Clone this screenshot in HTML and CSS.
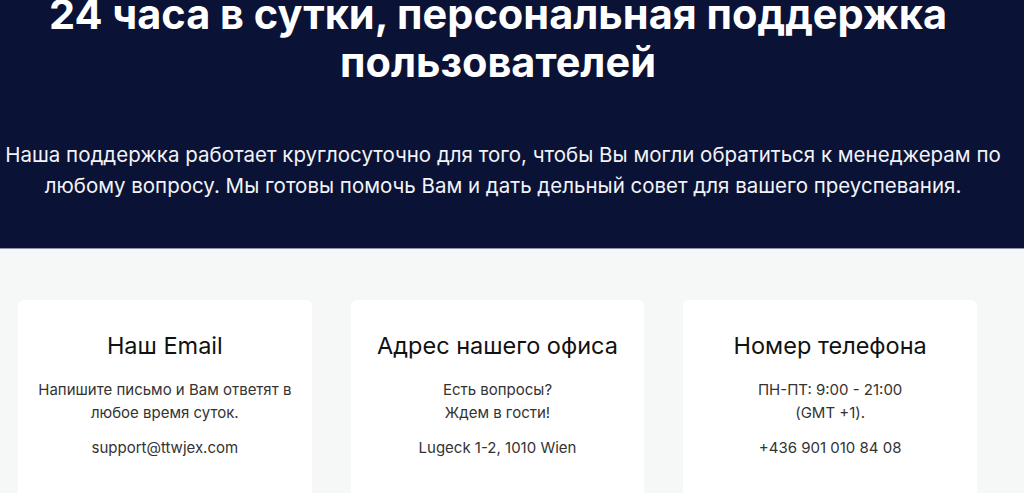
FILE: index.html
```html
<!DOCTYPE html>
<html lang="ru">
  <head>
    <meta charset="UTF-8" />
    <meta name="viewport" content="width=device-width, initial-scale=1.0" />
    <title>Поддержка</title>
    <link rel="stylesheet" href="styles.css">
  </head>
  <body>
    <section class="support-hero">
      <h1 class="hero-title">24 часа в сутки, персональная поддержка пользователей</h1>
      <p class="hero-text">
        Наша поддержка работает круглосуточно для того, чтобы Вы могли обратиться к менеджерам по любому вопросу. Мы готовы помочь Вам и дать дельный совет для вашего преуспевания.
      </p>
    </section>

    <section class="contacts">
      <div class="contact-card">
        <h3 class="contact-title">Наш Email</h3>
        <p class="contact-text">Напишите письмо и Вам ответят в любое время суток.</p>
        <p class="contact-value">support@ttwjex.com</p>
      </div>
      <div class="contact-card">
        <h3 class="contact-title">Адрес нашего офиса</h3>
        <p class="contact-text">Есть вопросы?<br>Ждем в гости!</p>
        <p class="contact-value">Lugeck 1-2, 1010 Wien</p>
      </div>
      <div class="contact-card">
        <h3 class="contact-title">Номер телефона</h3>
        <p class="contact-text">ПН-ПТ: 9:00 - 21:00<br>(GMT +1).</p>
        <p class="contact-value">+436 901 010 84 08</p>
      </div>
    </section>
  </body>
</html>
```

FILE: styles.css
```css
* {
  box-sizing: border-box;
  margin: 0;
  padding: 0;
}

body {
  font-family: Inter, "Noto Sans", sans-serif;
  background-color: #f6f7f7;
  color: #333;
}

/* HERO */
.support-hero {
  background-color: #0a1235;
  color: white;
  text-align: center;
  height: 259px;
  margin-top: -10px;
  padding-right: 12px;
  border-bottom: 1px solid #8d93a8;
}

.hero-title {
  font-size: 41.5px;
  line-height: 48px;
  font-weight: 700;
  max-width: 950px;
  margin: 0 auto;
  padding-right: 16px;
  color: white;
}

.hero-text {
  font-size: 20.5px;
  line-height: 31px;
  max-width: 1010px;
  margin: 53px auto 0;
  padding-right: 6px;
  color: #f2f3f7;
}

/* CONTACT CARDS */
.contacts {
  display: grid;
  grid-template-columns: repeat(3, 1fr);
  gap: 39px;
  width: 959px;
  margin: 51px 0 0 18px;
}

.contact-card {
  background-color: white;
  border-radius: 6px;
  padding: 32px 16px 40px;
  text-align: center;
  min-height: 220px;
}

.contact-title {
  font-size: 23.5px;
  line-height: 28px;
  font-weight: 400;
  color: #111;
  margin-bottom: 18px;
}

.contact-text,
.contact-value {
  font-size: 15px;
  line-height: 23px;
  color: #333;
}

.contact-value {
  margin-top: 12px;
}
```
